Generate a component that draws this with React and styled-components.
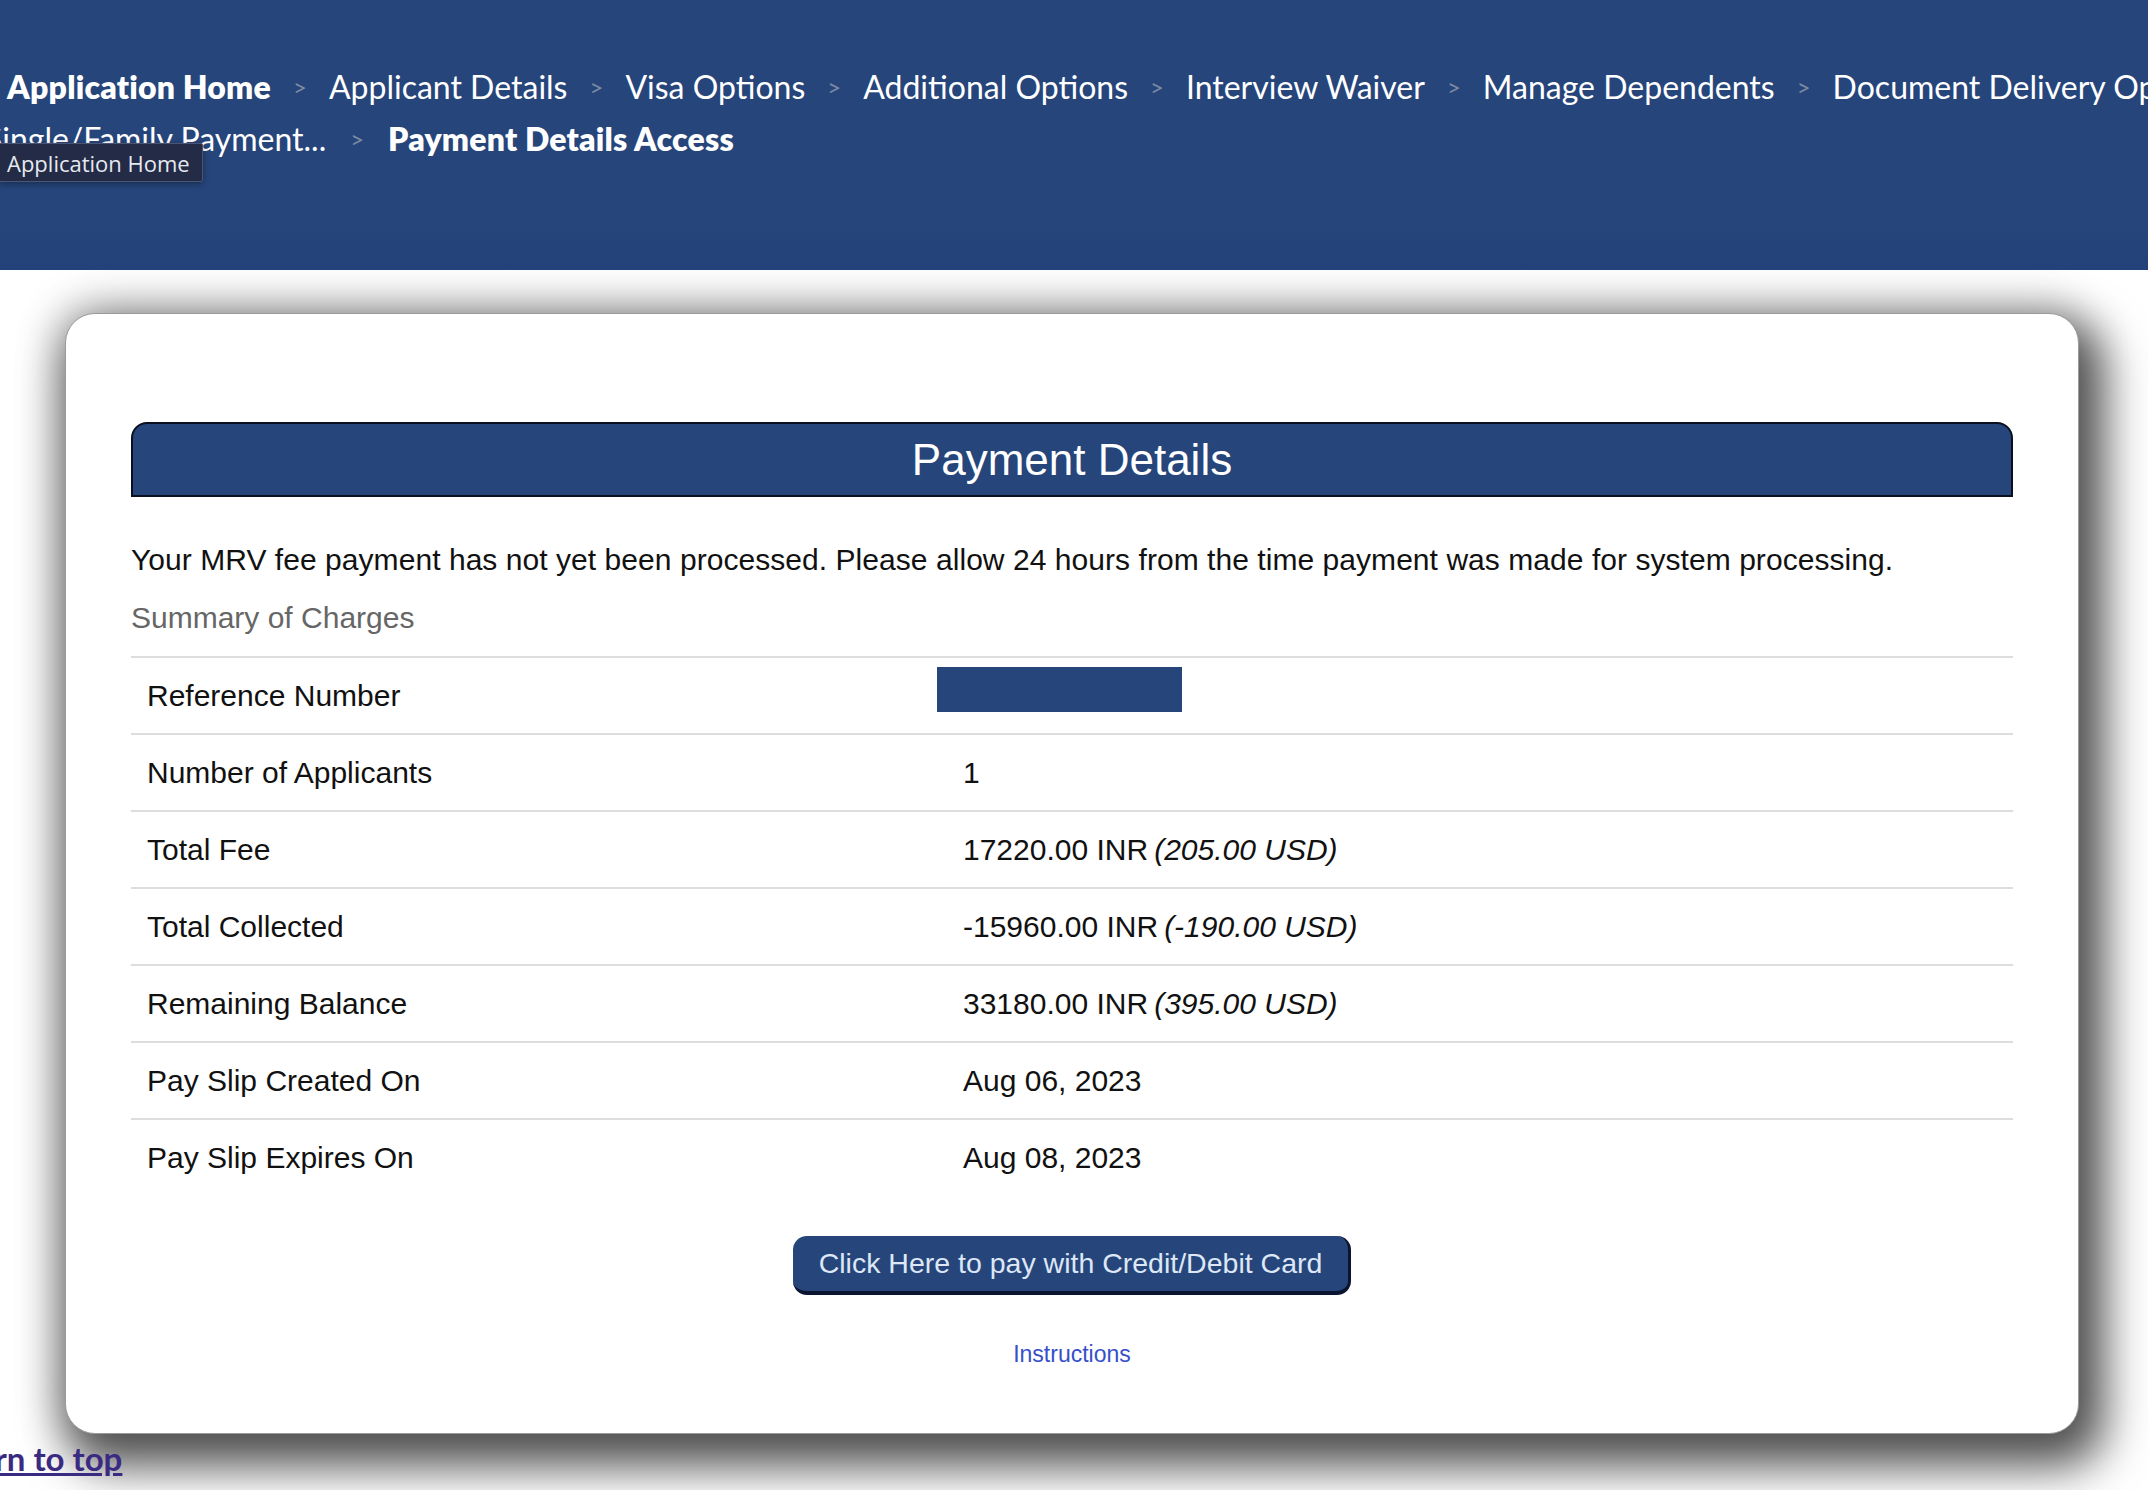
import React from 'react';
import styled, { createGlobalStyle } from 'styled-components';

const GlobalStyle = createGlobalStyle`
  html, body {
    margin: 0;
    padding: 0;
    background: #ffffff;
    overflow: hidden;
  }
  body {
    width: 2148px;
    height: 1490px;
    font-family: "Liberation Sans", Arial, sans-serif;
  }
`;

const Page = styled.div`
  position: relative;
  width: 2148px;
  height: 1490px;
  overflow: hidden;
`;

const Header = styled.header`
  position: relative;
  height: 270px;
  box-sizing: border-box;
  padding-top: 60px;
  background: linear-gradient(180deg, #26457b 0%, #26457b 85%, #23417a 100%);
  font-family: "Lato", "Open Sans", sans-serif;
  color: #ffffff;
  overflow: hidden;
`;

const Crumbs = styled.nav`
  display: flex;
  flex-direction: column;
`;

const CrumbRow = styled.div`
  display: flex;
  align-items: center;
  white-space: nowrap;
  height: 52px;
  margin-left: ${(p) => p.$shift || 0}px;
`;

const Crumb = styled.span`
  font-size: 32px;
  font-weight: ${(p) => (p.$current ? 800 : 400)};
  letter-spacing: ${(p) => (p.$current ? '0.2px' : '0')};
  color: #ffffff;
`;

const Sep = styled.span`
  font-size: 24px;
  color: #7f8aa3;
  padding: 0 ${(p) => p.$pad || 22}px;
`;

const Tooltip = styled.div`
  position: absolute;
  left: -2px;
  top: 143px;
  width: 205px;
  height: 39px;
  box-sizing: border-box;
  padding-left: 8px;
  display: flex;
  align-items: center;
  background: #232b46;
  border: 1px solid #4b5573;
  border-radius: 2px;
  box-shadow: 0 2px 6px rgba(0, 0, 0, 0.35);
  font-family: "Open Sans", "Lato", sans-serif;
  font-size: 22px;
  color: #e6e9f0;
`;

const Main = styled.main`
  padding: 43px 0 0 65px;
`;

const Card = styled.section`
  width: 2014px;
  height: 1121px;
  box-sizing: border-box;
  padding: 108px 65px 0 65px;
  background: #ffffff;
  border: 1px solid #9a9a9a;
  border-radius: 30px;
  box-shadow: 14px 22px 45px 12px rgba(0, 0, 0, 0.62),
    0 0 40px 10px rgba(0, 0, 0, 0.22);
  display: flex;
  flex-direction: column;
`;

const TitleBar = styled.h1`
  margin: 0;
  height: 75px;
  box-sizing: border-box;
  display: flex;
  align-items: center;
  justify-content: center;
  background: #26457b;
  border: 2px solid #0b1020;
  border-radius: 16px 16px 0 0;
  color: #ffffff;
  font-size: 44px;
  font-weight: 400;
`;

const Notice = styled.p`
  margin: 45px 0 0;
  font-size: 30px;
  line-height: 36px;
  letter-spacing: 0.05px;
  color: #111111;
`;

const Summary = styled.p`
  margin: 22px 0 0;
  font-size: 30px;
  line-height: 36px;
  color: #666666;
`;

const Table = styled.div`
  margin-top: 20px;
  display: grid;
  grid-template-columns: 816px 1fr;
`;

const Cell = styled.div`
  height: 77px;
  box-sizing: border-box;
  display: flex;
  align-items: center;
  padding-left: 16px;
  border-top: 2px solid #dddddd;
  font-size: 30px;
  color: #111111;
  em {
    font-style: italic;
    margin-left: 6px;
  }
`;

const Redacted = styled.span`
  display: block;
  width: 245px;
  height: 45px;
  margin-left: -26px;
  margin-top: -12px;
  background: #26457b;
`;

const Actions = styled.div`
  display: flex;
  flex-direction: column;
  align-items: center;
  margin-top: 41px;
`;

const PayButton = styled.button`
  width: 558px;
  height: 59px;
  box-sizing: border-box;
  background: #26457b;
  border: none;
  border-right: 3px solid #0a1530;
  border-bottom: 4px solid #0a1530;
  border-radius: 14px;
  color: #dde7f6;
  font-family: "Liberation Sans", Arial, sans-serif;
  font-size: 28.5px;
  padding: 0;
  cursor: pointer;
`;

const InstructionsLink = styled.a`
  margin-top: 45px;
  font-size: 23px;
  line-height: 28px;
  color: #3650c9;
  text-decoration: none;
`;

const TopLink = styled.a`
  display: block;
  width: max-content;
  margin: 9px 0 0 -139px;
  font-family: "Lato", "Open Sans", sans-serif;
  font-size: 33px;
  font-weight: 700;
  line-height: 30px;
  color: #3a2a82;
  text-decoration: underline;
`;

const steps = [
  'Application Home',
  'Applicant Details',
  'Visa Options',
  'Additional Options',
  'Interview Waiver',
  'Manage Dependents',
  'Document Delivery Options',
];

const rows = [
  { label: 'Reference Number', redacted: true },
  { label: 'Number of Applicants', value: '1' },
  { label: 'Total Fee', value: '17220.00 INR', usd: '(205.00 USD)' },
  { label: 'Total Collected', value: '-15960.00 INR', usd: '(-190.00 USD)' },
  { label: 'Remaining Balance', value: '33180.00 INR', usd: '(395.00 USD)' },
  { label: 'Pay Slip Created On', value: 'Aug 06, 2023' },
  { label: 'Pay Slip Expires On', value: 'Aug 08, 2023' },
];

export default function App() {
  return (
    <>
      <GlobalStyle />
      <Page>
        <Header>
          <Crumbs>
            <CrumbRow $shift={7}>
              {steps.map((s, i) => (
                <React.Fragment key={s}>
                  {i > 0 && <Sep>&gt;</Sep>}
                  <Crumb $current={i === 0}>{s}</Crumb>
                </React.Fragment>
              ))}
            </CrumbRow>
            <CrumbRow $shift={-15}>
              <Crumb>Single/Family Payment...</Crumb>
              <Sep $pad={24}>&gt;</Sep>
              <Crumb $current>Payment Details Access</Crumb>
            </CrumbRow>
          </Crumbs>
          <Tooltip>Application Home</Tooltip>
        </Header>
        <Main>
          <Card>
            <TitleBar>Payment Details</TitleBar>
            <Notice>
              Your MRV fee payment has not yet been processed. Please allow 24
              hours from the time payment was made for system processing.
            </Notice>
            <Summary>Summary of Charges</Summary>
            <Table>
              {rows.map((r) => (
                <React.Fragment key={r.label}>
                  <Cell>{r.label}</Cell>
                  <Cell $value>
                    {r.redacted ? (
                      <Redacted />
                    ) : (
                      <>
                        {r.value}
                        {r.usd && <em>{r.usd}</em>}
                      </>
                    )}
                  </Cell>
                </React.Fragment>
              ))}
            </Table>
            <Actions>
              <PayButton>Click Here to pay with Credit/Debit Card</PayButton>
              <InstructionsLink href="#">Instructions</InstructionsLink>
            </Actions>
          </Card>
          <TopLink href="#">Return to top</TopLink>
        </Main>
      </Page>
    </>
  );
}
